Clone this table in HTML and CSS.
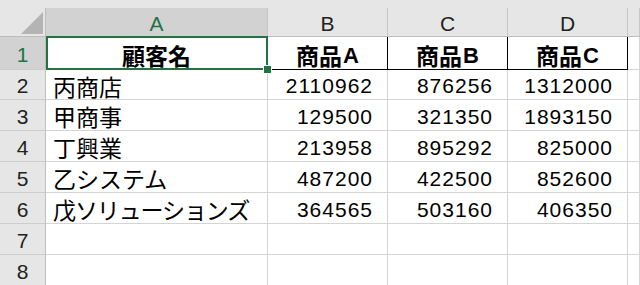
FILE: index.html
```html
<!DOCTYPE html>
<html lang="ja">
<head>
    <meta charset="UTF-8">
    <title>Sheet1</title>
    <link rel="stylesheet" href="styles.css">
</head>
<body>
    <div class="topbar"></div>
    <div class="sheet">
        <!-- column headers -->
        <div class="corner"><span class="corner-mark"></span></div>
        <div class="col-head active">A</div>
        <div class="col-head">B</div>
        <div class="col-head">C</div>
        <div class="col-head">D</div>
        <div class="col-head"></div>

        <!-- row 1 -->
        <div class="row-head active">1</div>
        <div class="cell title boxed">顧客名</div>
        <div class="cell title boxed">商品<span class="latin">A</span></div>
        <div class="cell title boxed">商品<span class="latin">B</span></div>
        <div class="cell title boxed">商品<span class="latin">C</span></div>
        <div class="cell"></div>

        <div class="row-head">2</div>
        <div class="cell name">丙商店</div>
        <div class="cell num">2110962</div>
        <div class="cell num">876256</div>
        <div class="cell num">1312000</div>
        <div class="cell"></div>

        <div class="row-head">3</div>
        <div class="cell name">甲商事</div>
        <div class="cell num">129500</div>
        <div class="cell num">321350</div>
        <div class="cell num">1893150</div>
        <div class="cell"></div>

        <div class="row-head">4</div>
        <div class="cell name">丁興業</div>
        <div class="cell num">213958</div>
        <div class="cell num">895292</div>
        <div class="cell num">825000</div>
        <div class="cell"></div>

        <div class="row-head">5</div>
        <div class="cell name">乙システム</div>
        <div class="cell num">487200</div>
        <div class="cell num">422500</div>
        <div class="cell num">852600</div>
        <div class="cell"></div>

        <div class="row-head">6</div>
        <div class="cell name kana">戊ソリューションズ</div>
        <div class="cell num">364565</div>
        <div class="cell num">503160</div>
        <div class="cell num">406350</div>
        <div class="cell"></div>

        <div class="row-head">7</div>
        <div class="cell"></div>
        <div class="cell"></div>
        <div class="cell"></div>
        <div class="cell"></div>
        <div class="cell"></div>

        <div class="row-head">8</div>
        <div class="cell"></div>
        <div class="cell"></div>
        <div class="cell"></div>
        <div class="cell"></div>
        <div class="cell"></div>

        <!-- active cell A1 -->
        <div class="selection"><span class="fill-handle"></span></div>
    </div>
</body>
</html>
```

FILE: styles.css
```css
body {
    margin: 0;
    padding: 0;
    background: #fff;
    overflow: hidden;
    font-family: "Noto Sans CJK JP", sans-serif;
    color: #000;
}

.topbar {
    height: 8px;
    background: #e6e6e6;
}

.sheet {
    position: relative;
    display: grid;
    grid-template-columns: 46px 222px 120px 120px 120px 1fr;
    grid-template-rows: 29px 33px 30px repeat(6, 31px);
}

.sheet > div {
    box-sizing: border-box;
    border-right: 1px solid #d4d4d4;
    border-bottom: 1px solid #d4d4d4;
}

.corner {
    position: relative;
    background: #e6e6e6;
    border-right-color: #bdbdbd !important;
    border-bottom-color: #bdbdbd !important;
}

.corner-mark {
    position: absolute;
    right: 2px;
    bottom: 2px;
    width: 0;
    height: 0;
    border-left: 22px solid transparent;
    border-bottom: 22px solid #b4b4b4;
}

.col-head,
.row-head {
    display: flex;
    align-items: center;
    justify-content: center;
    background: #e6e6e6;
    font-family: "Liberation Sans", sans-serif;
    font-size: 21px;
    color: #222;
}

.col-head {
    padding-top: 4px;
    border-right-color: #c6c6c6 !important;
    border-bottom-color: #bdbdbd !important;
}

.row-head {
    padding-top: 3px;
    border-right-color: #bdbdbd !important;
    border-bottom-color: #cdcdcd !important;
}

.col-head.active,
.row-head.active {
    background: #d2d2d2;
    color: #217346;
}

.cell {
    display: flex;
    align-items: center;
    font-size: 23px;
    line-height: 1;
    white-space: nowrap;
}

.cell.name {
    padding-left: 7px;
    padding-top: 3px;
}

.cell.kana {
    letter-spacing: -1.1px;
}

.cell.title {
    justify-content: center;
    font-weight: bold;
    padding-top: 5px;
}

.cell.boxed {
    border-right-color: #000;
    border-bottom-color: #000;
}

.latin {
    font-family: "Liberation Sans", sans-serif;
    font-size: 22px;
    margin-left: 1px;
}

.cell.num {
    justify-content: flex-end;
    padding-right: 14px;
    padding-top: 2px;
    font-family: "Liberation Sans", sans-serif;
    font-size: 21px;
    letter-spacing: 1px;
}

.selection {
    position: absolute;
    left: 46px;
    top: 28px;
    width: 222px;
    height: 34px;
    border: 2px solid #217346 !important;
    pointer-events: none;
}

.fill-handle {
    position: absolute;
    right: -6px;
    bottom: -6px;
    width: 7px;
    height: 7px;
    background: #217346;
    border: 1px solid #fff;
}
```
